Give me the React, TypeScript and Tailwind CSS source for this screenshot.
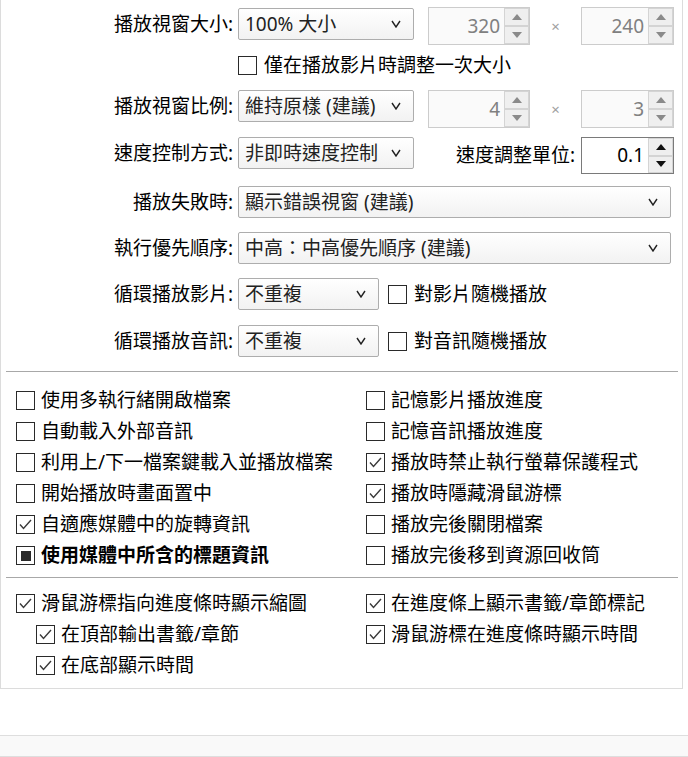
import React from "react";

const font = "font-['Noto_Sans','Noto_Sans_CJK_TC',sans-serif]";

function Chevron() {
  return (
    <svg width="10" height="8" viewBox="0 0 10 8" className="shrink-0">
      <polyline points="1,1 5,7 9,1" fill="none" stroke="#222" strokeWidth="1.4" />
    </svg>
  );
}

function Dropdown({ value, w }: { value: string; w: string }) {
  return (
    <div
      className={`flex h-[32px] shrink-0 items-center justify-between rounded-[2px] border border-[#adadad] bg-gradient-to-b from-white to-[#f2f2f2] pl-[6px] pr-[12px] ${w}`}
    >
      <span className="whitespace-nowrap text-[19px] leading-none text-[#222]">{value}</span>
      <Chevron />
    </div>
  );
}

function SpinBtn({ up, enabled }: { up?: boolean; enabled?: boolean }) {
  const c = enabled ? "#111" : "#8a8a8a";
  return (
    <div className="flex flex-1 items-center justify-center border border-[#d4d4d4] bg-[#efefef]">
      <svg width="10" height="6" viewBox="0 0 10 6">
        {up ? <polygon points="0,6 10,6 5,0" fill={c} /> : <polygon points="0,0 10,0 5,6" fill={c} />}
      </svg>
    </div>
  );
}

function Spinner({ value, w, h, enabled }: { value: string; w: string; h: string; enabled?: boolean }) {
  return (
    <div
      className={`flex shrink-0 border ${h} ${w} ${
        enabled ? "border-[#7a7a7a] bg-white" : "border-[#cccccc] bg-[#fafafa]"
      }`}
    >
      <div
        className={`flex flex-1 items-center justify-end pr-[4px] text-[19px] leading-none ${
          enabled ? "text-black" : "text-[#808080]"
        }`}
      >
        {value}
      </div>
      <div className="flex w-[25px] flex-col">
        <SpinBtn up enabled={enabled} />
        <SpinBtn enabled={enabled} />
      </div>
    </div>
  );
}

function Box({ state }: { state?: "on" | "mixed" }) {
  return (
    <div className="flex h-[19px] w-[19px] shrink-0 items-center justify-center border border-[#2a2a2a] bg-white">
      {state === "on" && (
        <svg width="17" height="17" viewBox="0 0 17 17">
          <polyline points="3,8.5 6.5,12.5 14,4" fill="none" stroke="#3a3a3a" strokeWidth="1.4" />
        </svg>
      )}
      {state === "mixed" && <div className="h-[10px] w-[10px] bg-[#2a2a2a]" />}
    </div>
  );
}

function Check({ label, state, bold }: { label: string; state?: "on" | "mixed"; bold?: boolean }) {
  return (
    <div className="flex h-[31px] items-center gap-[6px]">
      <Box state={state} />
      <span className={`whitespace-nowrap text-[19px] leading-none text-black ${bold ? "font-bold" : ""}`}>
        {label}
      </span>
    </div>
  );
}

function Label({ text }: { text: string }) {
  return (
    <div className="mr-[5px] w-[232px] shrink-0 whitespace-nowrap text-right text-[19px] leading-[32px] text-black">
      {text}
    </div>
  );
}

const Times = () => (
  <div className="flex h-[38px] w-[51px] shrink-0 items-center justify-center text-[15px] text-[#a0a0a0]">×</div>
);

const leftChecks: { label: string; state?: "on" | "mixed"; bold?: boolean }[] = [
  { label: "使用多執行緒開啟檔案" },
  { label: "自動載入外部音訊" },
  { label: "利用上/下一檔案鍵載入並播放檔案" },
  { label: "開始播放時畫面置中" },
  { label: "自適應媒體中的旋轉資訊", state: "on" },
  { label: "使用媒體中所含的標題資訊", state: "mixed", bold: true },
];

const rightChecks: { label: string; state?: "on" | "mixed" }[] = [
  { label: "記憶影片播放進度" },
  { label: "記憶音訊播放進度" },
  { label: "播放時禁止執行螢幕保護程式", state: "on" },
  { label: "播放時隱藏滑鼠游標", state: "on" },
  { label: "播放完後關閉檔案" },
  { label: "播放完後移到資源回收筒" },
];

export default function App() {
  return (
    <div className={`h-[757px] w-[688px] overflow-hidden bg-white ${font}`}>
      <div className="box-border flex h-[689px] w-[683px] flex-col border-x border-b border-[#dcdcdc] pt-[7px]">
        {/* size */}
        <div className="flex items-start">
          <div className="mt-[1px] flex items-center">
            <Label text="播放視窗大小:" />
            <Dropdown value="100% 大小" w="w-[176px]" />
          </div>
          <div className="ml-[14px] flex items-center">
            <Spinner value="320" w="w-[102px]" h="h-[38px]" />
            <Times />
            <Spinner value="240" w="w-[93px]" h="h-[38px]" />
          </div>
        </div>

        <div className="mt-[10px] flex h-[21px] items-center gap-[7px] pl-[237px]">
          <Box />
          <span className="text-[19px] leading-none text-black">僅在播放影片時調整一次大小</span>
        </div>

        {/* ratio */}
        <div className="mt-[14px] flex items-start">
          <div className="flex items-center">
            <Label text="播放視窗比例:" />
            <Dropdown value="維持原樣 (建議)" w="w-[176px]" />
          </div>
          <div className="ml-[14px] flex items-center">
            <Spinner value="4" w="w-[102px]" h="h-[38px]" />
            <Times />
            <Spinner value="3" w="w-[93px]" h="h-[38px]" />
          </div>
        </div>

        {/* speed */}
        <div className="mt-[9px] flex w-[673px] items-start">
          <Label text="速度控制方式:" />
          <Dropdown value="非即時速度控制" w="w-[176px]" />
          <div className="mr-[6px] flex h-[37px] flex-1 items-center justify-end text-[19px] leading-none text-black">
            速度調整單位:
          </div>
          <Spinner value="0.1" w="w-[93px]" h="h-[37px]" enabled />
        </div>

        <div className="mt-[12px] flex items-center">
          <Label text="播放失敗時:" />
          <Dropdown value="顯示錯誤視窗 (建議)" w="w-[433px]" />
        </div>

        <div className="mt-[14px] flex items-center">
          <Label text="執行優先順序:" />
          <Dropdown value="中高：中高優先順序 (建議)" w="w-[433px]" />
        </div>

        <div className="mt-[14px] flex items-center">
          <Label text="循環播放影片:" />
          <Dropdown value="不重複" w="w-[141px]" />
          <div className="ml-[9px] flex items-center gap-[7px]">
            <Box />
            <span className="text-[19px] leading-none text-black">對影片隨機播放</span>
          </div>
        </div>

        <div className="mt-[15px] flex items-center">
          <Label text="循環播放音訊:" />
          <Dropdown value="不重複" w="w-[141px]" />
          <div className="ml-[9px] flex items-center gap-[7px]">
            <Box />
            <span className="text-[19px] leading-none text-black">對音訊隨機播放</span>
          </div>
        </div>

        <div className="mx-[5px] mt-[14px] h-px w-[672px] bg-[#a8a8a8]" />

        <div className="mt-[13px] grid grid-cols-[350px_1fr] pl-[15px]">
          <div className="flex flex-col">
            {leftChecks.map((c) => (
              <Check key={c.label} label={c.label} state={c.state} bold={c.bold} />
            ))}
          </div>
          <div className="flex flex-col">
            {rightChecks.map((c) => (
              <Check key={c.label} label={c.label} state={c.state} />
            ))}
          </div>
        </div>

        <div className="mx-[5px] mt-[6px] h-px w-[672px] bg-[#a8a8a8]" />

        <div className="mt-[10px] grid grid-cols-[350px_1fr] pl-[15px]">
          <div className="flex flex-col">
            <Check label="滑鼠游標指向進度條時顯示縮圖" state="on" />
            <div className="pl-[20px]">
              <Check label="在頂部輸出書籤/章節" state="on" />
              <Check label="在底部顯示時間" state="on" />
            </div>
          </div>
          <div className="flex flex-col">
            <Check label="在進度條上顯示書籤/章節標記" state="on" />
            <Check label="滑鼠游標在進度條時顯示時間" state="on" />
          </div>
        </div>
      </div>

      <div className="mt-[46px] h-[22px] border-y border-[#dedede] bg-[#f9f9f9]" />
    </div>
  );
}
